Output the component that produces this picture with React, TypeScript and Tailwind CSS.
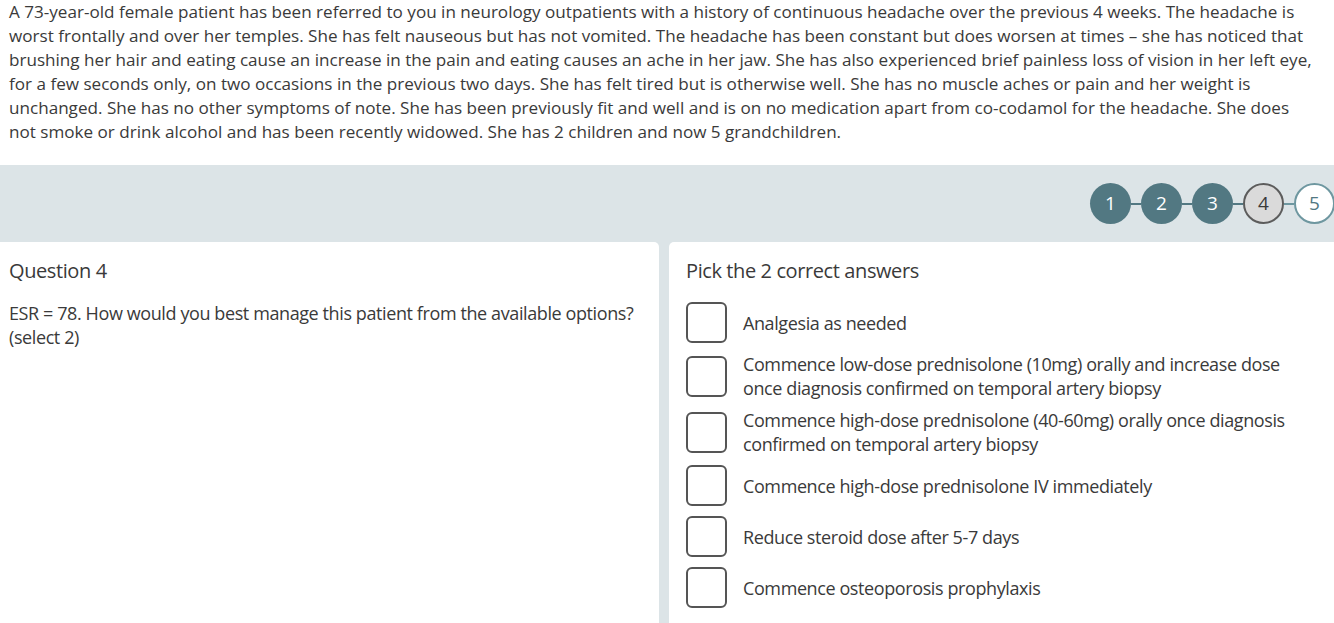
import React from "react";

const options = [
  "Analgesia as needed",
  "Commence low-dose prednisolone (10mg) orally and increase dose once diagnosis confirmed on temporal artery biopsy",
  "Commence high-dose prednisolone (40-60mg) orally once diagnosis confirmed on temporal artery biopsy",
  "Commence high-dose prednisolone IV immediately",
  "Reduce steroid dose after 5-7 days",
  "Commence osteoporosis prophylaxis",
];

const steps = [1, 2, 3, 4, 5];

function Step({ n }: { n: number }) {
  if (n < 4) {
    return (
      <div className="flex h-[41px] w-[41px] shrink-0 items-center justify-center rounded-full bg-[#527882] text-[19px] text-white">
        {n}
      </div>
    );
  }
  if (n === 4) {
    return (
      <div className="flex h-[41px] w-[41px] shrink-0 items-center justify-center rounded-full border-2 border-[#5c5c5c] bg-[#dadada] text-[19px] text-[#3a3a3a]">
        {n}
      </div>
    );
  }
  return (
    <div className="flex h-[41px] w-[41px] shrink-0 items-center justify-center rounded-full border-2 border-[#6e97a0] bg-white text-[19px] text-[#527882]">
      {n}
    </div>
  );
}

export default function App() {
  return (
    <div
      className="min-h-[623px] w-[1334px] overflow-hidden bg-white text-[#3a3a3a]"
      style={{ fontFamily: '"Open Sans", "Noto Sans", sans-serif' }}
    >
      <p className="pl-[9px] pr-[16px] text-[17.1px] leading-[24px]">
        A 73-year-old female patient has been referred to you in neurology outpatients with a history of continuous
        headache over the previous 4 weeks. The headache is worst frontally and over her temples. She has felt nauseous
        but has not vomited. The headache has been constant but does worsen at times – she has noticed that brushing her
        hair and eating cause an increase in the pain and eating causes an ache in her jaw. She has also experienced
        brief painless loss of vision in her left eye, for a few seconds only, on two occasions in the previous two days.
        She has felt tired but is otherwise well. She has no muscle aches or pain and her weight is unchanged. She has no
        other symptoms of note. She has been previously fit and well and is on no medication apart from co-codamol for
        the headache. She does not smoke or drink alcohol and has been recently widowed. She has 2 children and now 5
        grandchildren.
      </p>

      <div className="mt-[21px] bg-[#dce4e7]">
        <div className="flex h-[77px] items-center justify-end">
          <div className="mr-[-1px] flex items-center">
            {steps.map((n, i) => (
              <React.Fragment key={n}>
                {i > 0 && (
                  <div className={`h-[2px] w-[10px] ${n === 5 ? "bg-[#6e97a0]" : "bg-[#527882]"}`} />
                )}
                <Step n={n} />
              </React.Fragment>
            ))}
          </div>
        </div>

        <div className="flex h-[381px] gap-[10px]">
          <div className="w-[659px] rounded-tr-[5px] bg-white px-[9px] pt-[17px]">
            <h2 className="text-[20px] leading-[24px] tracking-[-0.4px]">Question 4</h2>
            <p className="mt-[18px] text-[18px] leading-[24px] tracking-[-0.4px]">
              ESR = 78. How would you best manage this patient from the available options? (select 2)
            </p>
          </div>
          <div className="flex-1 rounded-tl-[5px] bg-white pl-[17px] pr-[30px] pt-[17px]">
            <h2 className="text-[20px] leading-[24px] tracking-[-0.4px]">Pick the 2 correct answers</h2>
            <ul className="mt-[18px] flex flex-col gap-[8px]">
              {options.map((o) => (
                <li key={o} className="flex min-h-[43px] items-center gap-[16px]">
                  <span className="h-[41px] w-[41px] shrink-0 rounded-[6px] border-2 border-[#555]" />
                  <span className="text-[18px] leading-[24px] tracking-[-0.4px]">{o}</span>
                </li>
              ))}
            </ul>
          </div>
        </div>
      </div>
    </div>
  );
}
